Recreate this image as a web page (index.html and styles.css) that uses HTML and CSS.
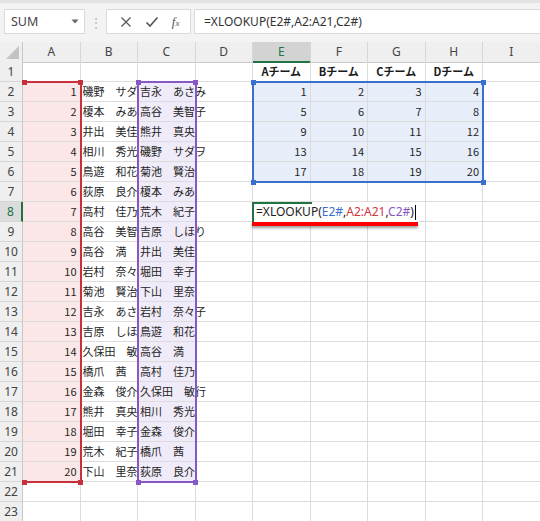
FILE: index.html
```html
<!DOCTYPE html>
<html lang="ja">
<head>
  <meta charset="UTF-8" />
  <title>XLOOKUP</title>
  <link rel="stylesheet" href="styles.css">
</head>
<body>
  <div class="toolbar">
    <div class="namebox">
      <span>SUM</span>
      <svg width="8" height="5" viewBox="0 0 8 5"><path d="M0.5 0.5 L7.5 0.5 L4 4.5 Z" fill="#666"/></svg>
    </div>
    <div class="grip">⋮</div>
    <div class="fxbox">
      <svg width="12" height="12" viewBox="0 0 12 12"><path d="M1.5 1.5 L10.5 10.5 M10.5 1.5 L1.5 10.5" stroke="#555" stroke-width="1.2" fill="none"/></svg>
      <svg width="14" height="12" viewBox="0 0 14 12"><path d="M1.5 6.5 L5 10 L12.5 1.5" stroke="#555" stroke-width="1.6" fill="none"/></svg>
      <span class="fx">f<small>x</small></span>
    </div>
    <div class="formula">=XLOOKUP(E2#,A2:A21,C2#)</div>
  </div>

  <div class="sheet">
    <div class="row head">
      <div class="corner"><svg width="13" height="13" viewBox="0 0 13 13"><path d="M13 0 L13 13 L0 13 Z" fill="#c2c2c2"/></svg></div>
      <div class="ch">A</div><div class="ch">B</div><div class="ch">C</div><div class="ch">D</div><div class="ch sel">E</div><div class="ch">F</div><div class="ch">G</div><div class="ch">H</div><div class="ch">I</div>
    </div>
    <div class="row"><div class="rh">1</div><div class="c"></div><div class="c"></div><div class="c"></div><div class="c"></div><div class="c th">Aチーム</div><div class="c th">Bチーム</div><div class="c th">Cチーム</div><div class="c th">Dチーム</div><div class="c"></div></div>
    <div class="row"><div class="rh">2</div><div class="c n ra">1</div><div class="c nm">磯野　サダヲ</div><div class="c ov rc">吉永　あさみ</div><div class="c"></div><div class="c n re">1</div><div class="c n re">2</div><div class="c n re">3</div><div class="c n re">4</div><div class="c"></div></div>
    <div class="row"><div class="rh">3</div><div class="c n ra">2</div><div class="c nm">榎本　みあ</div><div class="c ov rc">高谷　美智子</div><div class="c"></div><div class="c n re">5</div><div class="c n re">6</div><div class="c n re">7</div><div class="c n re">8</div><div class="c"></div></div>
    <div class="row"><div class="rh">4</div><div class="c n ra">3</div><div class="c nm">井出　美佳</div><div class="c ov rc">熊井　真央</div><div class="c"></div><div class="c n re">9</div><div class="c n re">10</div><div class="c n re">11</div><div class="c n re">12</div><div class="c"></div></div>
    <div class="row"><div class="rh">5</div><div class="c n ra">4</div><div class="c nm">相川　秀光</div><div class="c ov rc">磯野　サダヲ</div><div class="c"></div><div class="c n re">13</div><div class="c n re">14</div><div class="c n re">15</div><div class="c n re">16</div><div class="c"></div></div>
    <div class="row"><div class="rh">6</div><div class="c n ra">5</div><div class="c nm">鳥遊　和花</div><div class="c ov rc">菊池　賢治</div><div class="c"></div><div class="c n re">17</div><div class="c n re">18</div><div class="c n re">19</div><div class="c n re">20</div><div class="c"></div></div>
    <div class="row"><div class="rh">7</div><div class="c n ra">6</div><div class="c nm">荻原　良介</div><div class="c ov rc">榎本　みあ</div><div class="c"></div><div class="c"></div><div class="c"></div><div class="c"></div><div class="c"></div><div class="c"></div></div>
    <div class="row"><div class="rh sel">8</div><div class="c n ra">7</div><div class="c nm">高村　佳乃</div><div class="c ov rc">荒木　紀子</div><div class="c"></div><div class="c"></div><div class="c"></div><div class="c"></div><div class="c"></div><div class="c"></div></div>
    <div class="row"><div class="rh">9</div><div class="c n ra">8</div><div class="c nm">高谷　美智子</div><div class="c ov rc">吉原　しほり</div><div class="c"></div><div class="c"></div><div class="c"></div><div class="c"></div><div class="c"></div><div class="c"></div></div>
    <div class="row"><div class="rh">10</div><div class="c n ra">9</div><div class="c nm">高谷　満</div><div class="c ov rc">井出　美佳</div><div class="c"></div><div class="c"></div><div class="c"></div><div class="c"></div><div class="c"></div><div class="c"></div></div>
    <div class="row"><div class="rh">11</div><div class="c n ra">10</div><div class="c nm">岩村　奈々子</div><div class="c ov rc">堀田　幸子</div><div class="c"></div><div class="c"></div><div class="c"></div><div class="c"></div><div class="c"></div><div class="c"></div></div>
    <div class="row"><div class="rh">12</div><div class="c n ra">11</div><div class="c nm">菊池　賢治</div><div class="c ov rc">下山　里奈</div><div class="c"></div><div class="c"></div><div class="c"></div><div class="c"></div><div class="c"></div><div class="c"></div></div>
    <div class="row"><div class="rh">13</div><div class="c n ra">12</div><div class="c nm">吉永　あさみ</div><div class="c ov rc">岩村　奈々子</div><div class="c"></div><div class="c"></div><div class="c"></div><div class="c"></div><div class="c"></div><div class="c"></div></div>
    <div class="row"><div class="rh">14</div><div class="c n ra">13</div><div class="c nm">吉原　しほり</div><div class="c ov rc">鳥遊　和花</div><div class="c"></div><div class="c"></div><div class="c"></div><div class="c"></div><div class="c"></div><div class="c"></div></div>
    <div class="row"><div class="rh">15</div><div class="c n ra">14</div><div class="c nm">久保田　敏行</div><div class="c ov rc">高谷　満</div><div class="c"></div><div class="c"></div><div class="c"></div><div class="c"></div><div class="c"></div><div class="c"></div></div>
    <div class="row"><div class="rh">16</div><div class="c n ra">15</div><div class="c nm">橋爪　茜</div><div class="c ov rc">高村　佳乃</div><div class="c"></div><div class="c"></div><div class="c"></div><div class="c"></div><div class="c"></div><div class="c"></div></div>
    <div class="row"><div class="rh">17</div><div class="c n ra">16</div><div class="c nm">金森　俊介</div><div class="c ov rc">久保田　敏行</div><div class="c"></div><div class="c"></div><div class="c"></div><div class="c"></div><div class="c"></div><div class="c"></div></div>
    <div class="row"><div class="rh">18</div><div class="c n ra">17</div><div class="c nm">熊井　真央</div><div class="c ov rc">相川　秀光</div><div class="c"></div><div class="c"></div><div class="c"></div><div class="c"></div><div class="c"></div><div class="c"></div></div>
    <div class="row"><div class="rh">19</div><div class="c n ra">18</div><div class="c nm">堀田　幸子</div><div class="c ov rc">金森　俊介</div><div class="c"></div><div class="c"></div><div class="c"></div><div class="c"></div><div class="c"></div><div class="c"></div></div>
    <div class="row"><div class="rh">20</div><div class="c n ra">19</div><div class="c nm">荒木　紀子</div><div class="c ov rc">橋爪　茜</div><div class="c"></div><div class="c"></div><div class="c"></div><div class="c"></div><div class="c"></div><div class="c"></div></div>
    <div class="row"><div class="rh">21</div><div class="c n ra">20</div><div class="c nm">下山　里奈</div><div class="c ov rc">荻原　良介</div><div class="c"></div><div class="c"></div><div class="c"></div><div class="c"></div><div class="c"></div><div class="c"></div></div>
    <div class="row"><div class="rh">22</div><div class="c"></div><div class="c"></div><div class="c"></div><div class="c"></div><div class="c"></div><div class="c"></div><div class="c"></div><div class="c"></div><div class="c"></div></div>
    <div class="row"><div class="rh">23</div><div class="c"></div><div class="c"></div><div class="c"></div><div class="c"></div><div class="c"></div><div class="c"></div><div class="c"></div><div class="c"></div><div class="c"></div></div>

    <!-- reference ranges highlighted while editing -->
    <div class="rng rng-a"><i class="h tl"></i><i class="h tr"></i><i class="h bl"></i><i class="h br"></i></div>
    <div class="rng rng-c"><i class="h tl"></i><i class="h tr"></i><i class="h bl"></i><i class="h br"></i></div>
    <div class="rng rng-e"><i class="h tl"></i><i class="h tr"></i><i class="h bl"></i><i class="h br"></i></div>

    <div class="editor">=XLOOKUP(<span class="r1">E2#</span>,<span class="r2">A2:A21</span>,<span class="r3">C2#</span>)<span class="caret"></span></div>
    <div class="mark"></div>
  </div>
</body>
</html>
```

FILE: styles.css
```css
* {
  box-sizing: border-box;
}
body {
  margin: 0;
  width: 540px;
  height: 521px;
  overflow: hidden;
  background: #fff;
  font-family: "Noto Sans CJK JP", "Noto Sans", sans-serif;
  color: #262626;
}

/* formula bar */
.toolbar {
  height: 42px;
  background: #f3f3f3;
  border-top: 3px solid #e3e3e3;
  display: flex;
  align-items: flex-start;
  padding: 6px 0 0 4px;
}
.namebox {
  width: 81px;
  height: 25px;
  background: #fff;
  border: 1px solid #dadada;
  display: flex;
  align-items: center;
  justify-content: space-between;
  padding: 0 5px 0 6px;
  font-family: "Noto Sans", sans-serif;
  font-size: 12.5px;
  color: #444;
}
.grip {
  width: 21px;
  height: 25px;
  text-align: center;
  line-height: 25px;
  color: #b5b5b5;
  font-size: 12px;
}
.fxbox {
  width: 85px;
  height: 25px;
  background: #fff;
  border: 1px solid #dadada;
  display: flex;
  align-items: center;
  justify-content: space-around;
  padding: 0 4px 0 6px;
}
.fx {
  font-family: "Liberation Serif", serif;
  font-style: italic;
  font-size: 13px;
  color: #555;
}
.fx small {
  font-size: 9px;
}
.formula {
  flex: 1;
  height: 25px;
  margin-left: 3px;
  margin-right: -4px;
  background: #fff;
  border: 1px solid #dadada;
  padding-left: 9px;
  line-height: 23px;
  font-family: "Noto Sans", sans-serif;
  font-size: 12px;
  color: #333;
}

/* grid */
.sheet {
  position: relative;
  width: 540px;
}
.row {
  display: grid;
  grid-template-columns: 23px repeat(9, 57.5px);
  height: 20px;
}
.corner {
  background: #efefef;
  border-right: 1px solid #c8c8c8;
  border-bottom: 1px solid #c8c8c8;
  display: flex;
  align-items: flex-end;
  justify-content: flex-end;
  padding: 0 3px 3px 0;
}
.ch {
  background: #efefef;
  border-right: 1px solid #d6d6d6;
  border-bottom: 1px solid #c8c8c8;
  text-align: center;
  line-height: 19px;
  font-family: "Noto Sans", sans-serif;
  font-size: 12px;
  color: #444;
}
.ch.sel {
  background: #d3d3d3;
  border-bottom: 2px solid #217346;
  color: #217346;
}
.rh {
  background: #efefef;
  border-right: 1px solid #c8c8c8;
  border-bottom: 1px solid #d6d6d6;
  text-align: center;
  line-height: 19px;
  font-family: "Noto Sans", sans-serif;
  font-size: 12px;
  color: #444;
}
.rh.sel {
  background: #dcdcdc;
  border-right: 2px solid #217346;
  color: #217346;
}
.c {
  border-right: 1px solid #dcdcdc;
  border-bottom: 1px solid #dcdcdc;
  font-size: 11px;
  line-height: 19px;
  white-space: nowrap;
  padding: 0 2px;
}
.c.n {
  text-align: right;
  padding-right: 3px;
}
.c.nm {
  overflow: hidden;
}
.c.ov {
  overflow: visible;
}
.c.th {
  text-align: center;
  font-weight: bold;
  color: #1a1a1a;
}
.ra {
  background: #fbe7e7;
}
.rc {
  background: #efebf8;
}
.re {
  background: #e7eef9;
}

/* range outlines */
.rng {
  position: absolute;
  border: 2px solid currentColor;
}
.rng-a {
  color: #c8313b;
  left: 23px;
  top: 39px;
  width: 58.5px;
  height: 402px;
  border-left: none;
}
.rng-c {
  color: #8757c4;
  left: 137px;
  top: 39px;
  width: 59.5px;
  height: 402px;
}
.rng-e {
  color: #3b6fcc;
  left: 252px;
  top: 39px;
  width: 232px;
  height: 102px;
}
.h {
  position: absolute;
  width: 5px;
  height: 5px;
  background: currentColor;
}
.h.tl { left: -3.5px; top: -3.5px; }
.h.tr { right: -3.5px; top: -3.5px; }
.h.bl { left: -3.5px; bottom: -3.5px; }
.h.br { right: -3.5px; bottom: -3.5px; }
.rng-a .h.tl, .rng-a .h.bl { left: -1.5px; }

/* in-cell editor on E8 */
.editor {
  position: absolute;
  left: 252px;
  top: 160px;
  width: 167px;
  height: 20px;
  background: #fff;
  border-left: 2px solid #217346;
  padding-left: 2px;
  font-family: "Noto Sans", sans-serif;
  font-size: 12px;
  line-height: 20px;
  color: #222;
  white-space: nowrap;
}
.editor::before {
  content: "";
  position: absolute;
  left: -2px;
  top: 0;
  width: 60px;
  height: 2px;
  background: #217346;
}
.r1 { color: #3b6fcc; }
.r2 { color: #d0383d; }
.r3 { color: #8757c4; }
.caret {
  display: inline-block;
  width: 1px;
  height: 15px;
  margin-left: 1px;
  background: #000;
  vertical-align: middle;
}
.mark {
  position: absolute;
  left: 252px;
  top: 180px;
  width: 166px;
  height: 4px;
  background: #f00;
  box-shadow: 0 2px 3px rgba(0, 0, 0, 0.4);
}
```
